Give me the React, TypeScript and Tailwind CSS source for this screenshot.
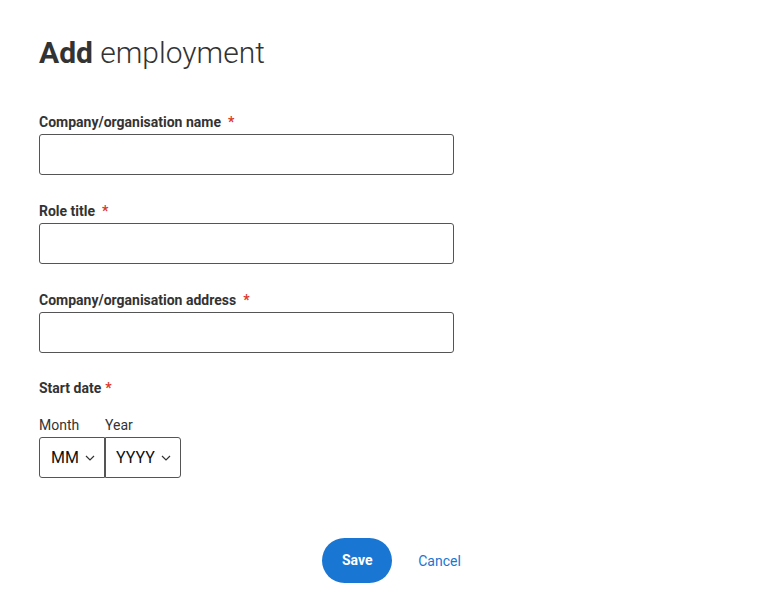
import React from "react";

const fields = [
  { label: "Company/organisation name" },
  { label: "Role title" },
  { label: "Company/organisation address" },
];

const Chevron = () => (
  <svg width="10" height="6" viewBox="0 0 10 6" fill="none" className="ml-[6px]">
    <path d="M1 1l4 4 4-4" stroke="#333" strokeWidth="1.2" />
  </svg>
);

const App = () => {
  return (
    <div className="min-h-screen bg-white text-[#333] font-['Roboto',sans-serif] px-[39px] pt-[34px]">
      <h1 className="text-[30px] leading-[38px] text-[#333] font-light">
        <span className="font-bold">Add</span> employment
      </h1>

      <div className="mt-[42px] flex flex-col gap-[28px]">
        {fields.map((f) => (
          <div key={f.label} className="flex flex-col">
            <label className="text-[14px] leading-[16px] font-bold text-[#333] mb-[4px]">
              {f.label}
              <span className="text-[#d9382c] ml-[7px]">*</span>
            </label>
            <input
              type="text"
              className="w-[415px] h-[41px] border border-[#555] rounded-[3px] px-2 outline-none"
            />
          </div>
        ))}
      </div>

      <div className="mt-[27px]">
        <div className="text-[14px] leading-[16px] font-bold text-[#333]">
          Start date<span className="text-[#d9382c] ml-[4px]">*</span>
        </div>
        <div className="mt-[21px] flex">
          <div className="flex flex-col">
            <span className="text-[14px] leading-[16px] text-[#333] mb-[4px]">Month</span>
            <div className="w-[66px] h-[41px] border border-[#555] rounded-l-[3px] flex items-center pl-[11px] text-[16px] text-[#111]">
              MM
              <Chevron />
            </div>
          </div>
          <div className="flex flex-col">
            <span className="text-[14px] leading-[16px] text-[#333] mb-[4px]">Year</span>
            <div className="w-[76px] h-[41px] border border-[#555] rounded-r-[3px] flex items-center pl-[10px] text-[16px] text-[#111]">
              YYYY
              <Chevron />
            </div>
          </div>
        </div>
      </div>

      <div className="mt-[60px] flex justify-center items-center pl-[14px] gap-[26px]">
        <button className="w-[70px] h-[45px] rounded-full bg-[#1976d2] text-white text-[14px] font-bold">
          Save
        </button>
        <button className="text-[14px] text-[#1976d2] pt-[2px]">Cancel</button>
      </div>
    </div>
  );
};

export default App;
